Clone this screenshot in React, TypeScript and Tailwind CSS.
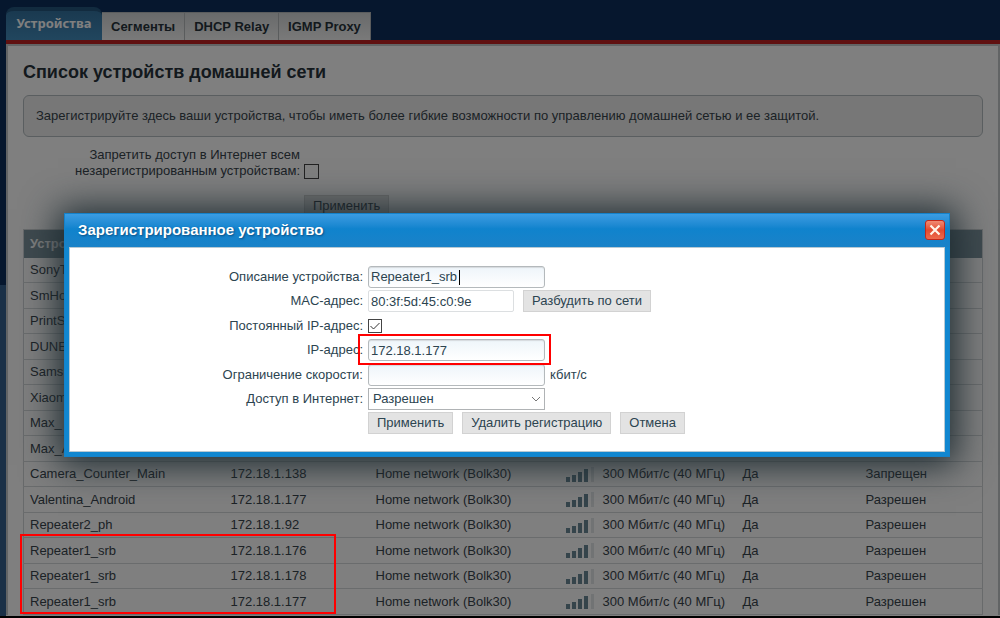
import { useState } from "react";
import type { ReactNode } from "react";

const TABS = ["Сегменты", "DHCP Relay", "IGMP Proxy"];

type Device = {
  name: string;
  ip?: string;
  access?: string;
  marked?: boolean;
};

const DEVICES: Device[] = [
  { name: "SonyT" },
  { name: "SmHo" },
  { name: "PrintS" },
  { name: "DUNE" },
  { name: "Sams" },
  { name: "Xiaom" },
  { name: "Max_" },
  { name: "Max_A" },
  { name: "Camera_Counter_Main", ip: "172.18.1.138", access: "Запрещен" },
  { name: "Valentina_Android", ip: "172.18.1.177", access: "Разрешен" },
  { name: "Repeater2_ph", ip: "172.18.1.92", access: "Разрешен" },
  { name: "Repeater1_srb", ip: "172.18.1.176", access: "Разрешен", marked: true },
  { name: "Repeater1_srb", ip: "172.18.1.178", access: "Разрешен" },
  { name: "Repeater1_srb", ip: "172.18.1.177", access: "Разрешен" },
];

const buttonClass =
  "h-[22px] border border-[#d2d2d2] bg-[#e3e3e3] px-2 text-[13px] leading-5 whitespace-nowrap";
const inputClass =
  "h-[22px] w-[177px] rounded-[3px] border border-[#b4b9bc] bg-gradient-to-b from-[#eef5fa] to-white px-0.5 text-[13px] shadow-[inset_0_1px_1px_#d5dadd] outline-none";

function SignalIcon() {
  return (
    <svg width="29" height="15" viewBox="0 0 29 15" aria-hidden>
      <g fill="#6b8997">
        <rect x="0" y="10" width="4" height="5" />
        <rect x="6" y="8" width="4" height="7" />
        <rect x="12" y="5" width="4" height="10" />
        <rect x="18" y="2" width="4" height="13" />
      </g>
      <rect x="25" y="0" width="3" height="15" fill="#e3e7e9" />
    </svg>
  );
}

function Tabs() {
  return (
    <nav className="flex items-end pt-[7px]">
      <a
        href="#devices"
        className="h-[33px] w-24 rounded-t-lg border-t-4 border-[#24567f] bg-gradient-to-b from-[#3473a0] to-[#438dbd] text-center font-['Noto_Sans',sans-serif] text-[13px] leading-6 font-bold text-white"
      >
        Устройства
      </a>
      {TABS.map((tab) => (
        <a
          key={tab}
          href="#tab"
          className="h-7 border-t border-r border-[#b5b9bb] bg-gradient-to-b from-[#d2d5d6] to-[#f4f4f4] px-[9px] text-[13px] leading-[27px] font-bold text-[#27323a]"
        >
          {tab}
        </a>
      ))}
    </nav>
  );
}

function DeviceTable() {
  return (
    <table className="w-full table-fixed border-collapse border border-[#d0d4d6] text-left">
      <colgroup>
        <col className="w-[201px]" />
        <col className="w-[145px]" />
        <col className="w-[190px]" />
        <col className="w-[177px]" />
        <col className="w-[123px]" />
        <col />
      </colgroup>
      <thead>
        <tr className="h-7 bg-[#7e949e] text-white">
          <th className="px-1.5" colSpan={6}>
            Устро
          </th>
        </tr>
      </thead>
      <tbody>
        {DEVICES.map((d, i) => (
          <tr key={i} className="h-[25px] border-b border-[#d4d8da] even:h-[26px]">
            <td className="relative px-1.5">
              {d.name}
              {d.marked && (
                <span className="absolute -top-1 -left-1 z-20 h-20 w-[316px] border-2 border-[#f00]" />
              )}
            </td>
            {d.ip ? (
              <>
                <td className="px-1.5">{d.ip}</td>
                <td className="px-1.5">Home network (Bolk30)</td>
                <td className="px-1.5">
                  <div className="flex items-center gap-2">
                    <SignalIcon />
                    <span className="whitespace-nowrap">300 Мбит/с (40 МГц)</span>
                  </div>
                </td>
                <td className="px-1.5">Да</td>
                <td className="px-1.5">{d.access}</td>
              </>
            ) : (
              <td colSpan={5} />
            )}
          </tr>
        ))}
      </tbody>
    </table>
  );
}

type FieldProps = {
  label: string;
  id?: string;
  children: ReactNode;
};

function Field({ label, id, children }: FieldProps) {
  return (
    <div className="flex h-6 items-center gap-[5px] odd:h-[25px]">
      <label htmlFor={id} className="w-[293px] text-right">
        {label}
      </label>
      {children}
    </div>
  );
}

function DeviceDialog() {
  const [name, setName] = useState("Repeater1_srb");
  const [ip, setIp] = useState("172.18.1.177");
  const [limit, setLimit] = useState("");
  const [fixed, setFixed] = useState(true);

  return (
    <div
      role="dialog"
      aria-labelledby="dialog-title"
      className="border border-[#1582ca] bg-[#1187d0] px-1 pb-1 shadow-[0_2px_34px_6px_#1c2a30]"
    >
      <header className="-mx-1 flex h-[33px] items-center justify-between bg-gradient-to-b from-[#3a9ce2] via-[#0f83cd] via-45% to-[#1a82c8] pr-1 pb-0.5 pl-[13px]">
        <h2 id="dialog-title" className="text-[15px] font-bold text-white [text-shadow:1px_1px_2px_#0b4d80]">
          Зарегистрированное устройство
        </h2>
        <button
          type="button"
          aria-label="Закрыть"
          className="flex h-5 w-5 items-center justify-center rounded-[3px] border border-[#c4281a] bg-gradient-to-b from-[#f08a72] via-[#e2492e] to-[#ee6a4c]"
        >
          <svg width="12" height="12" viewBox="0 0 12 12" aria-hidden>
            <path d="M1.5 1.5L10.5 10.5M10.5 1.5L1.5 10.5" stroke="#fff4e8" strokeWidth="2.2" />
          </svg>
        </button>
      </header>

      <form
        className="border border-[#b8c9d3] bg-white py-4 text-[#2c4450]"
        onSubmit={(e) => e.preventDefault()}
      >
        <Field label="Описание устройства:" id="name">
          <div className="relative flex">
            <input id="name" className={inputClass} value={name} onChange={(e) => setName(e.target.value)} />
            {/* Курсор в активном поле */}
            <span className="absolute top-1 left-[91px] h-[15px] w-px bg-black" />
          </div>
        </Field>
        <Field label="MAC-адрес:" id="mac">
          <input
            id="mac"
            readOnly
            value="80:3f:5d:45:c0:9e"
            className="h-[22px] w-[146px] rounded-xs border border-[#dcdfe1] bg-white px-0.5 text-[13px] outline-none"
          />
          <button type="button" className={`${buttonClass} ml-1`}>
            Разбудить по сети
          </button>
        </Field>
        <Field label="Постоянный IP-адрес:" id="fixed">
          <span className="relative flex">
            <input
              id="fixed"
              type="checkbox"
              checked={fixed}
              onChange={(e) => setFixed(e.target.checked)}
              className="h-[14px] w-[14px] appearance-none border border-[#444] bg-white"
            />
            {fixed && (
              <svg className="pointer-events-none absolute inset-0" width="14" height="14" viewBox="0 0 14 14" aria-hidden>
                <path d="M2.5 7L5.5 10L11.5 4" fill="none" stroke="#333" />
              </svg>
            )}
          </span>
        </Field>
        <Field label="IP-адрес:" id="ip">
          <div className="relative flex">
            <input id="ip" className={inputClass} value={ip} onChange={(e) => setIp(e.target.value)} />
            <span className="pointer-events-none absolute -top-[5px] -right-1.5 -bottom-1 -left-2.5 border-2 border-[#f00]" />
          </div>
        </Field>
        <Field label="Ограничение скорости:" id="limit">
          <input id="limit" className={inputClass} value={limit} onChange={(e) => setLimit(e.target.value)} />
          <span>кбит/с</span>
        </Field>
        <Field label="Доступ в Интернет:" id="access">
          <div className="relative flex">
            <select
              id="access"
              className="h-[22px] w-[177px] appearance-none border border-[#b0b3b5] bg-white px-1 text-[13px] leading-5"
            >
              <option>Разрешен</option>
              <option>Запрещен</option>
            </select>
            <svg className="pointer-events-none absolute top-2 right-1" width="10" height="7" viewBox="0 0 10 7" aria-hidden>
              <path d="M1 1L5 5L9 1" fill="none" stroke="#777" />
            </svg>
          </div>
        </Field>
        <div className="flex h-6 items-center gap-[9px] pl-[298px]">
          <button type="submit" className={buttonClass}>
            Применить
          </button>
          <button type="button" className={buttonClass}>
            Удалить регистрацию
          </button>
          <button type="button" className={buttonClass}>
            Отмена
          </button>
        </div>
      </form>
    </div>
  );
}

export default function App() {
  return (
    <div className="h-screen overflow-hidden border-b-2 border-black bg-[linear-gradient(#0c2e5c_285px,#34608f_285px)] pl-1.5 font-['Liberation_Sans',Arial,sans-serif] text-[13px] leading-4 text-[#38444c]">
      <div className="bg-[#0c2e5c]">
        <Tabs />
      </div>
      <main className="min-h-screen border-t-4 border-[#c02323] bg-white">
        <div className="border-x-2 border-t-2 border-[#c4c8ca] pr-[15px] pl-[15px]">
          <h1 className="pt-4 text-lg leading-5 font-bold text-[#27323a]">Список устройств домашней сети</h1>
          <p className="mt-[13px] rounded-md border border-[#b4bcc0] bg-[#eeefef] px-3 py-3">
            Зарегистрируйте здесь ваши устройства, чтобы иметь более гибкие возможности по управлению домашней сетью и ее
            защитой.
          </p>
          <div className="mt-2.5 flex items-end gap-1">
            <label htmlFor="deny" className="w-[277px] text-right">
              Запретить доступ в Интернет всем
              <br />
              незарегистрированным устройствам:
            </label>
            <input id="deny" type="checkbox" className="h-[15px] w-[15px] appearance-none border border-[#444] bg-white" />
          </div>
          <div className="mt-4 mb-3 flex pl-[281px]">
            <button type="button" className={buttonClass}>
              Применить
            </button>
          </div>
          <DeviceTable />
        </div>
      </main>

      <div className="fixed inset-0 z-10 bg-black/50" />
      <div className="fixed inset-0 z-30 pt-[213px] pr-[50px] pl-16">
        <DeviceDialog />
      </div>
    </div>
  );
}
